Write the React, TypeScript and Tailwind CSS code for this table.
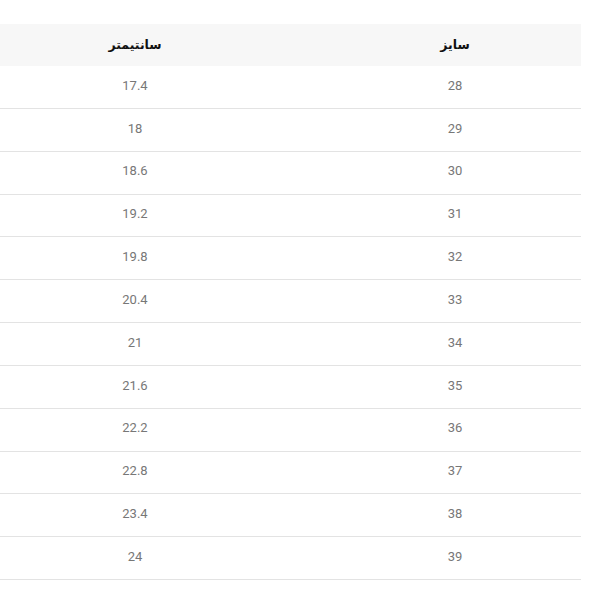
import React from 'react'

const rows: [string, string][] = [
  ['28', '17.4'],
  ['29', '18'],
  ['30', '18.6'],
  ['31', '19.2'],
  ['32', '19.8'],
  ['33', '20.4'],
  ['34', '21'],
  ['35', '21.6'],
  ['36', '22.2'],
  ['37', '22.8'],
  ['38', '23.4'],
  ['39', '24'],
]

export default function App() {
  return (
    <div
      className="min-h-[600px] w-[600px] overflow-hidden bg-white pt-[24px]"
      style={{ fontFamily: 'Roboto, "DejaVu Sans", sans-serif' }}
    >
      <div className="ml-[-59px] w-[640px]">
        <div className="grid h-[42px] grid-cols-[388px_252px] items-center bg-[#f7f7f7] text-[12.5px] font-bold text-[#111]">
          <div className="text-center" dir="rtl">سانتیمتر</div>
          <div className="text-center" dir="rtl">سایز</div>
        </div>
        {rows.map(([size, cm]) => (
          <div
            key={size}
            className="grid h-[42.85px] grid-cols-[388px_252px] items-center border-b border-[#e3e3e3] pb-[3px] text-[13px] text-[#777]"
          >
            <div className="text-center">{cm}</div>
            <div className="text-center">{size}</div>
          </div>
        ))}
      </div>
    </div>
  )
}
